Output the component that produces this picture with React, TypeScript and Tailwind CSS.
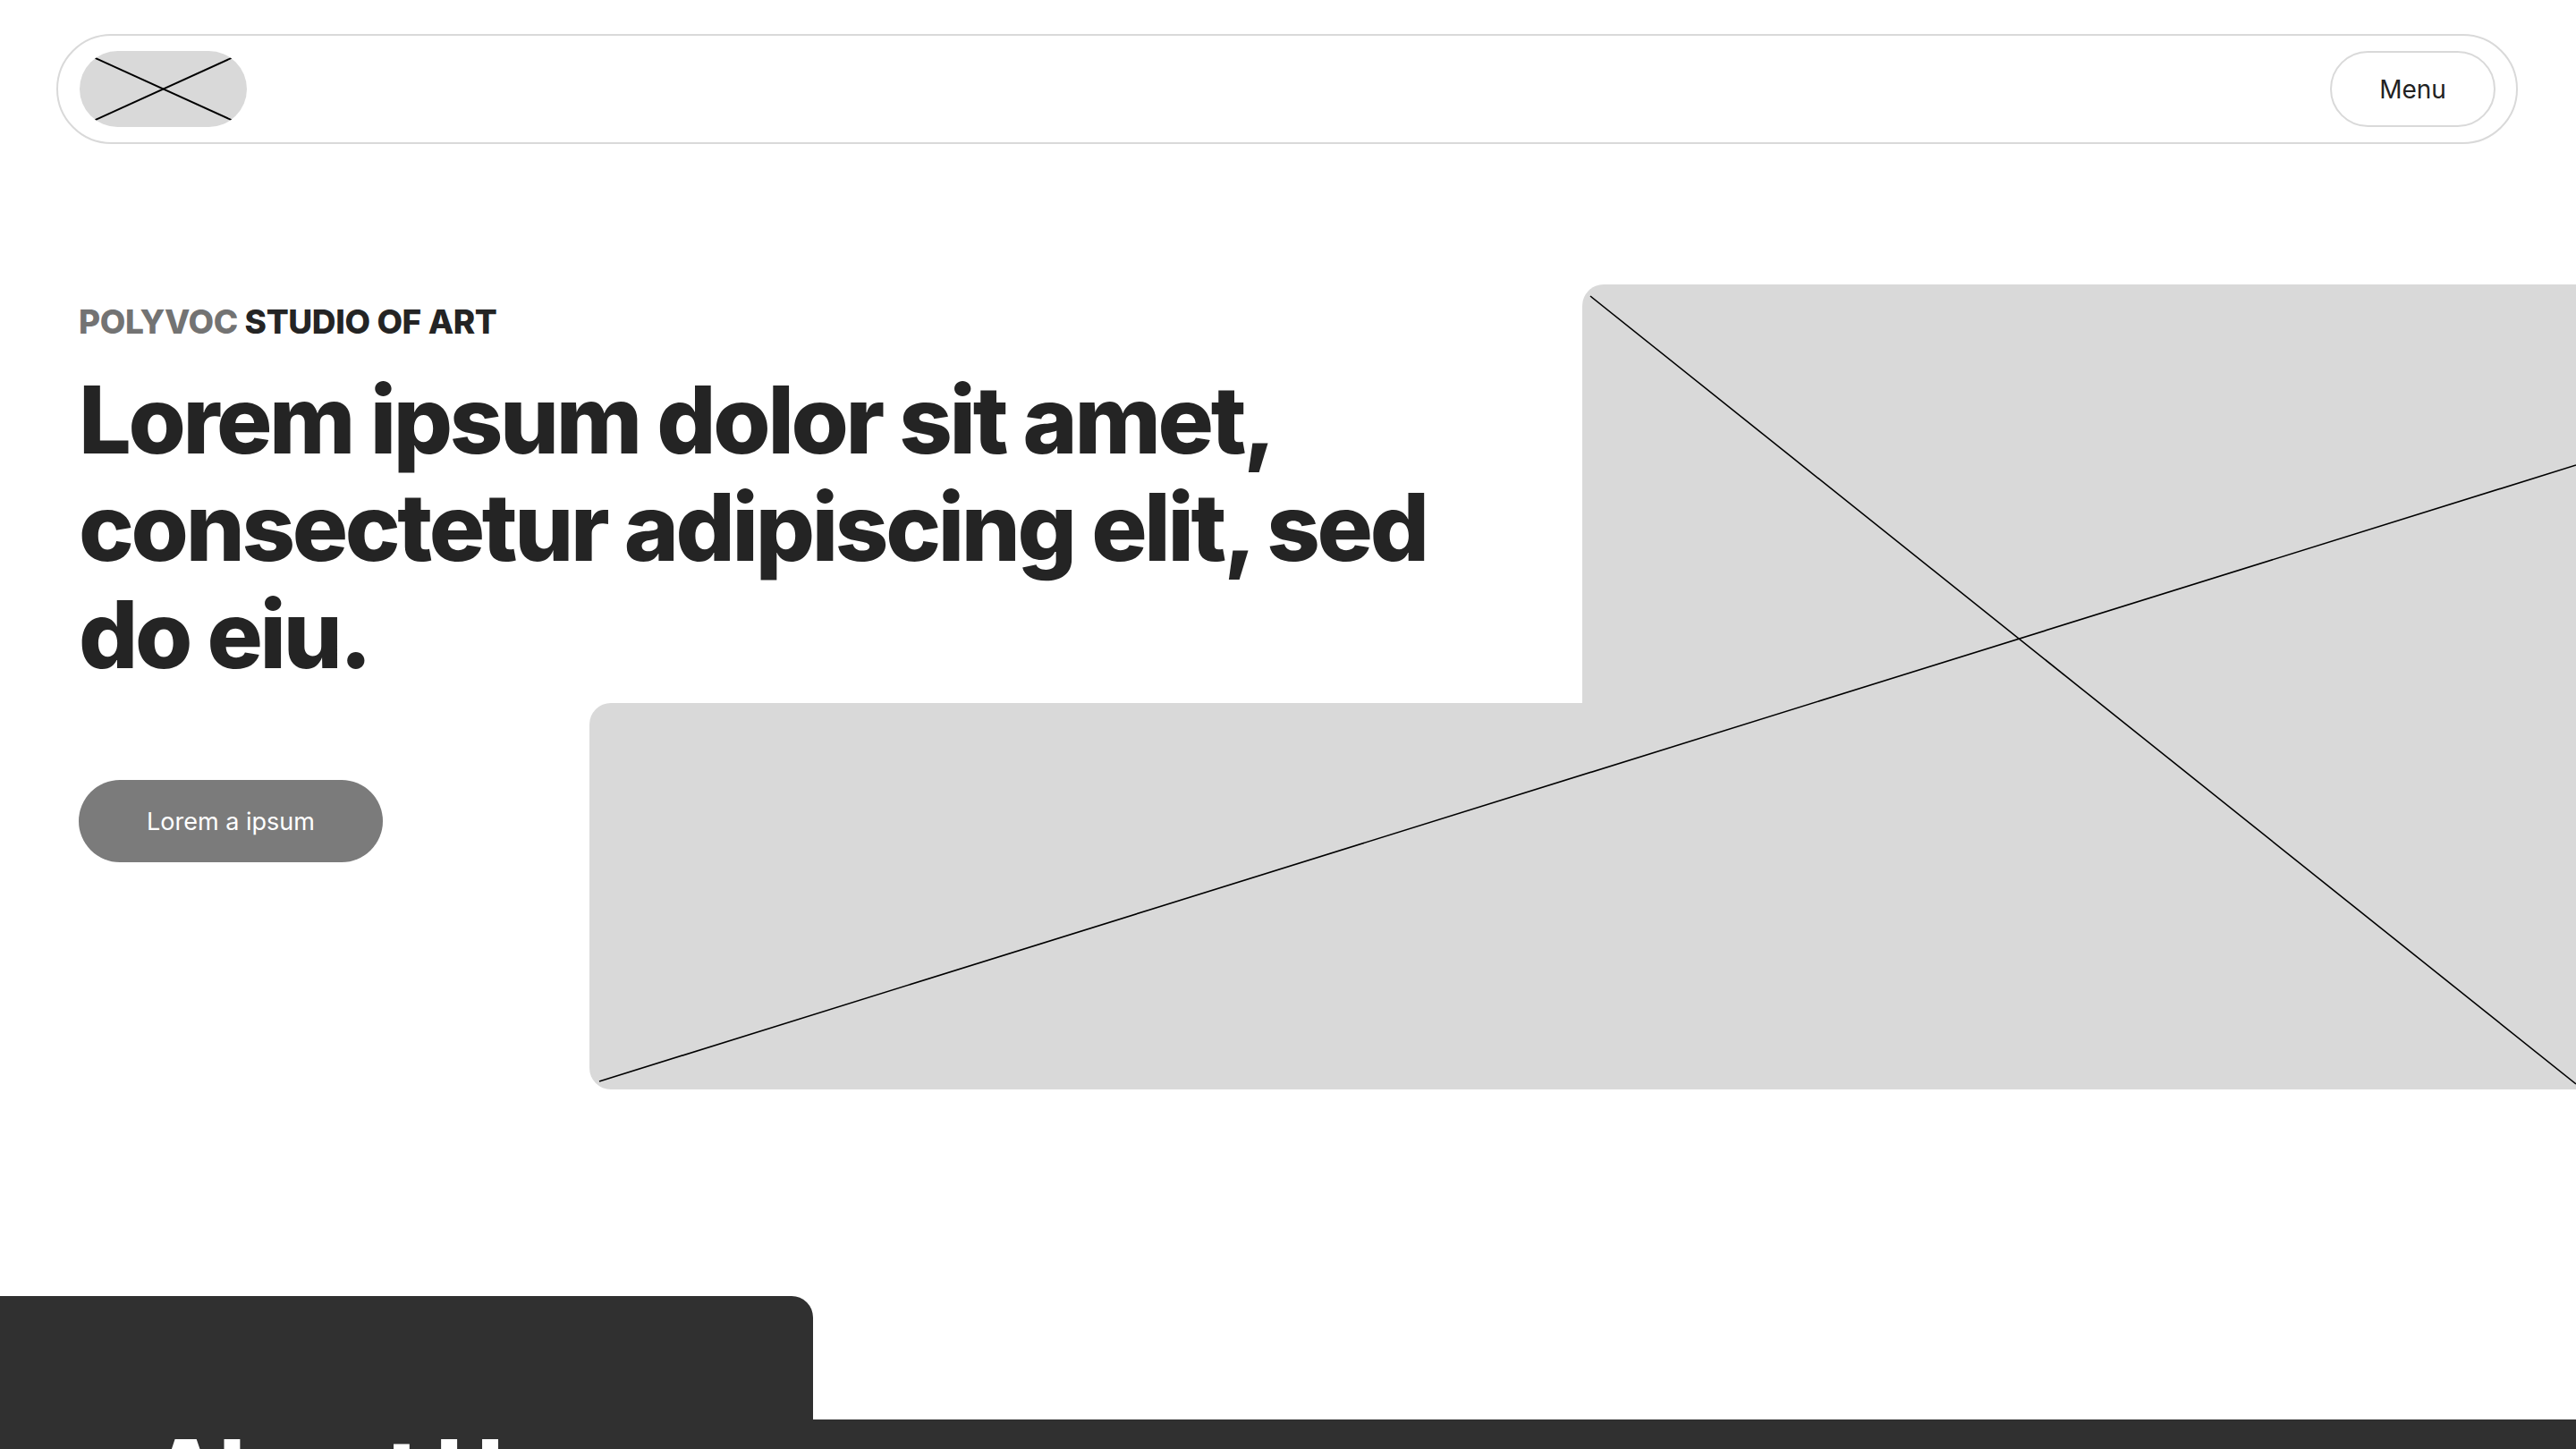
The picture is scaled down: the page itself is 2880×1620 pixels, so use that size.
export default function App() {
  return (
    <div className="h-[1620px] overflow-hidden bg-white font-['Inter',sans-serif] text-[#242424]">
      {/* Nav */}
      <nav className="ml-[63px] mr-[65px] mt-[38px] h-[123px] border-2 border-[#d9d9d9] rounded-full flex items-center justify-between pl-[24px] pr-[23px]">
        <div className="w-[187px] h-[85px] rounded-full bg-[#d9d9d9] overflow-hidden">
          <svg width="187" height="85" viewBox="0 0 187 85" className="block">
            <line x1="0" y1="0" x2="187" y2="85" stroke="#000" strokeWidth="2" />
            <line x1="0" y1="85" x2="187" y2="0" stroke="#000" strokeWidth="2" />
          </svg>
        </div>
        <button className="w-[185px] h-[85px] rounded-full border-2 border-[#d9d9d9] text-[28px] text-[#222] bg-white">
          Menu
        </button>
      </nav>

      {/* Hero */}
      <section className="mt-[157px] grid grid-cols-[88px_571px_1110px_1fr] grid-rows-[468px_432px]">
        <div className="col-start-2 col-span-2 row-start-1 pt-[20px]">
          <p className="text-[37px] leading-[44px] font-extrabold tracking-[-0.01em]">
            <span className="text-[#737373]">POLYVOC</span> STUDIO OF ART
          </p>
          <h1 className="mt-[27px] text-[104px] leading-[120px] font-extrabold tracking-[-0.032em]">
            Lorem ipsum dolor sit amet,
            <br />
            consectetur adipiscing elit, sed
            <br />
            do eiu.
          </h1>
        </div>
        <div className="col-start-2 row-start-2 pt-[86px]">
          <button className="w-[340px] h-[92px] rounded-full bg-[#7b7b7b] text-white text-[27px] pt-[3px]">
            Lorem a ipsum
          </button>
        </div>
        <div className="col-start-4 row-start-1 row-span-2 bg-[#d9d9d9] rounded-l-[24px]" />
        <div className="col-start-3 col-span-2 row-start-2 bg-[#d9d9d9] rounded-l-[24px]" />
        <svg
          className="col-start-3 col-span-2 row-start-1 row-span-2 w-full h-full pointer-events-none"
          viewBox="0 0 2221 900"
          preserveAspectRatio="none"
        >
          <line x1="1119" y1="13" x2="2221" y2="894" stroke="#000" strokeWidth="1.6" vectorEffect="non-scaling-stroke" />
          <line x1="11" y1="891" x2="2221" y2="202" stroke="#000" strokeWidth="1.6" vectorEffect="non-scaling-stroke" />
        </svg>
      </section>

      {/* About */}
      <section className="mt-[231px]">
        <div className="w-[909px] h-[138px] bg-[#303030] rounded-tr-[24px]" />
        <div className="bg-[#303030] h-[400px] pl-[168px]">
          <h2 className="text-white text-[104px] leading-[120px] font-extrabold tracking-[-0.032em]">
            About Us
          </h2>
        </div>
      </section>
    </div>
  );
}
